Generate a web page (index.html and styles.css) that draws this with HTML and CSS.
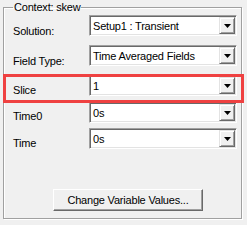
FILE: index.html
```html
<!DOCTYPE html>
<html lang="en">
<head>
    <meta charset="UTF-8">
    <title>Context</title>
    <link rel="stylesheet" href="styles.css">
</head>
<body>
    <fieldset class="group">
        <legend>Context: skew</legend>

        <div class="row r1">
            <label>Solution:</label>
            <div class="combo"><span class="value">Setup1 : Transient</span><span class="drop"><svg width="7" height="4" viewBox="0 0 7 4"><path d="M0 0h7L3.5 4z" fill="#000"/></svg></span></div>
        </div>

        <div class="row r2">
            <label>Field Type:</label>
            <div class="combo"><span class="value">Time Averaged Fields</span><span class="drop"><svg width="7" height="4" viewBox="0 0 7 4"><path d="M0 0h7L3.5 4z" fill="#000"/></svg></span></div>
        </div>

        <div class="row r3">
            <label>Slice</label>
            <div class="combo"><span class="value">1</span><span class="drop"><svg width="7" height="4" viewBox="0 0 7 4"><path d="M0 0h7L3.5 4z" fill="#000"/></svg></span></div>
        </div>

        <div class="row r4">
            <label>Time0</label>
            <div class="combo"><span class="value">0s</span><span class="drop"><svg width="7" height="4" viewBox="0 0 7 4"><path d="M0 0h7L3.5 4z" fill="#000"/></svg></span></div>
        </div>

        <div class="row r5">
            <label class="low">Time</label>
            <div class="combo"><span class="value">0s</span><span class="drop"><svg width="7" height="4" viewBox="0 0 7 4"><path d="M0 0h7L3.5 4z" fill="#000"/></svg></span></div>
        </div>

        <button class="btn">Change Variable Values...</button>
    </fieldset>

    <div class="highlight"></div>
</body>
</html>
```

FILE: styles.css
```css
body {
    margin: 0;
    background-color: #f0f0f0;
    font-family: "Liberation Sans", Arial, sans-serif;
    font-size: 11px;
    letter-spacing: -0.2px;
    color: #000;
    width: 247px;
    height: 225px;
    position: relative;
    overflow: hidden;
}
.group {
    margin: 0 0 0 3px;
    width: 239px;
    height: 219px;
    box-sizing: border-box;
    padding: 1px 3px 0 9px;
    border: 1px solid #a0a0a0;
    box-shadow: 1px 1px 0 #fff, inset 1px 1px 0 #fff;
}
.group legend {
    padding: 0 1px;
    line-height: 14px;
}
.row {
    display: flex;
    align-items: center;
}
.r1, .r2 {
    height: 30px;
}
.r3 {
    height: 27px;
}
.r4 {
    height: 26px;
}
.row label {
    width: 76px;
    padding-top: 2px;
}
.row label.low {
    padding-top: 8px;
}
.combo {
    display: flex;
    align-items: center;
    width: 148px;
    height: 21px;
    box-sizing: border-box;
    background: #fff;
    border: 1px solid;
    border-color: #a0a0a0 #fff #fff #a0a0a0;
    box-shadow: inset 1px 1px 0 #696969, inset -1px -1px 0 #e3e3e3;
    padding: 1px 2px 1px 3px;
    align-self: flex-start;
}
.combo .value {
    flex: 1;
}
.combo .drop {
    width: 16px;
    height: 17px;
    box-sizing: border-box;
    display: flex;
    align-items: center;
    justify-content: center;
    background: #f0f0f0;
    border: 1px solid;
    border-color: #e3e3e3 #696969 #696969 #e3e3e3;
    box-shadow: inset 1px 1px 0 #fff, inset -1px -1px 0 #a0a0a0;
    margin-right: -1px;
}
.btn {
    display: block;
    margin: 40px 0 0 40px;
    width: 150px;
    height: 22px;
    font: inherit;
    letter-spacing: inherit;
    color: #000;
    background: #f0f0f0;
    border: 1px solid;
    border-color: #fff #696969 #696969 #fff;
    box-shadow: inset -1px -1px 0 #a0a0a0;
    padding: 0;
}
.highlight {
    position: absolute;
    left: 3px;
    top: 74px;
    width: 241px;
    height: 29px;
    box-sizing: border-box;
    border: 3px solid #ef4141;
}
```
